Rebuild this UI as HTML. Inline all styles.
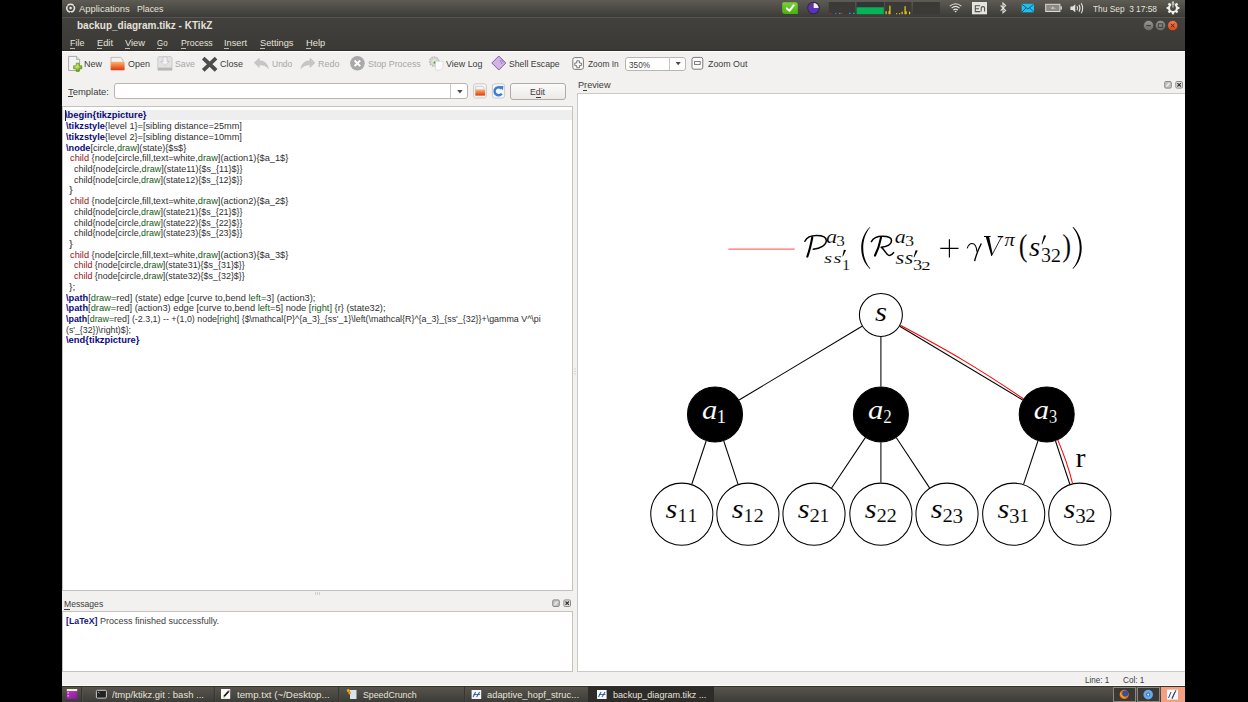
<!DOCTYPE html>
<html><head><meta charset="utf-8"><style>
html,body{margin:0;padding:0}
body{width:1248px;height:702px;background:#000;position:relative;overflow:hidden;font-family:"Liberation Sans",sans-serif}
</style></head><body>
<div style="position:absolute;left:62px;top:0px;width:1123px;height:702px;background:#f2f1f0"></div><div style="position:absolute;left:62px;top:0px;width:1123px;height:17px;background:linear-gradient(#5e5b54,#3c3b37)"></div><div style="position:absolute;left:62px;top:17px;width:1123px;height:17px;background:linear-gradient(#42413d,#3e3d39)"></div><div style="position:absolute;left:62px;top:17px;width:1123px;height:1px;background:#56544e"></div><div style="position:absolute;left:62px;top:34px;width:1123px;height:17px;background:linear-gradient(#3e3d39,#3a3935)"></div><div style="position:absolute;left:62px;top:49.5px;width:1123px;height:1.5px;background:#2e2d2a"></div><div style="position:absolute;left:62px;top:51px;width:1123px;height:1px;background:#ffffff"></div><div id="t0" style="position:absolute;left:79.3px;top:3.99px;font-family:'Liberation Sans',sans-serif;font-size:9.4px;line-height:10.50px;height:10.50px;font-weight:normal;color:#e6e2da;white-space:pre;transform-origin:0 0;transform:scaleX(1.0047);">Applications</div><div id="t1" style="position:absolute;left:137px;top:3.99px;font-family:'Liberation Sans',sans-serif;font-size:9.4px;line-height:10.50px;height:10.50px;font-weight:normal;color:#e6e2da;white-space:pre;transform-origin:0 0;transform:scaleX(0.9346);">Places</div><div id="t2" style="position:absolute;left:76.7px;top:20.20px;font-family:'Liberation Sans',sans-serif;font-size:10.5px;line-height:11.73px;height:11.73px;font-weight:bold;color:#e6e2da;white-space:pre;transform-origin:0 0;transform:scaleX(0.9516);">backup_diagram.tikz - KTikZ</div><div id="t3" style="position:absolute;left:70px;top:38.49px;font-family:'Liberation Sans',sans-serif;font-size:9.4px;line-height:10.50px;height:10.50px;font-weight:normal;color:#e6e2da;white-space:pre;transform-origin:0 0;transform:scaleX(0.9531);">File</div><div style="position:absolute;left:70px;top:48px;width:5px;height:1px;background:#dfdbd2;opacity:.8"></div><div id="t4" style="position:absolute;left:96.5px;top:38.49px;font-family:'Liberation Sans',sans-serif;font-size:9.4px;line-height:10.50px;height:10.50px;font-weight:normal;color:#e6e2da;white-space:pre;transform-origin:0 0;transform:scaleX(0.9903);">Edit</div><div style="position:absolute;left:96.5px;top:48px;width:5.0px;height:1px;background:#dfdbd2;opacity:.8"></div><div id="t5" style="position:absolute;left:124.5px;top:38.49px;font-family:'Liberation Sans',sans-serif;font-size:9.4px;line-height:10.50px;height:10.50px;font-weight:normal;color:#e6e2da;white-space:pre;transform-origin:0 0;transform:scaleX(0.9922);">View</div><div style="position:absolute;left:124.5px;top:48px;width:5.0px;height:1px;background:#dfdbd2;opacity:.8"></div><div id="t6" style="position:absolute;left:157.4px;top:38.49px;font-family:'Liberation Sans',sans-serif;font-size:9.4px;line-height:10.50px;height:10.50px;font-weight:normal;color:#e6e2da;white-space:pre;transform-origin:0 0;transform:scaleX(0.8469);">Go</div><div style="position:absolute;left:157.4px;top:48px;width:5.0px;height:1px;background:#dfdbd2;opacity:.8"></div><div id="t7" style="position:absolute;left:180.6px;top:38.49px;font-family:'Liberation Sans',sans-serif;font-size:9.4px;line-height:10.50px;height:10.50px;font-weight:normal;color:#e6e2da;white-space:pre;transform-origin:0 0;transform:scaleX(0.9358);">Process</div><div style="position:absolute;left:180.6px;top:48px;width:5.0px;height:1px;background:#dfdbd2;opacity:.8"></div><div id="t8" style="position:absolute;left:224px;top:38.49px;font-family:'Liberation Sans',sans-serif;font-size:9.4px;line-height:10.50px;height:10.50px;font-weight:normal;color:#e6e2da;white-space:pre;transform-origin:0 0;transform:scaleX(0.9807);">Insert</div><div style="position:absolute;left:224px;top:48px;width:5px;height:1px;background:#dfdbd2;opacity:.8"></div><div id="t9" style="position:absolute;left:260px;top:38.49px;font-family:'Liberation Sans',sans-serif;font-size:9.4px;line-height:10.50px;height:10.50px;font-weight:normal;color:#e6e2da;white-space:pre;transform-origin:0 0;transform:scaleX(0.9889);">Settings</div><div style="position:absolute;left:260px;top:48px;width:5px;height:1px;background:#dfdbd2;opacity:.8"></div><div id="t10" style="position:absolute;left:305.8px;top:38.49px;font-family:'Liberation Sans',sans-serif;font-size:9.4px;line-height:10.50px;height:10.50px;font-weight:normal;color:#e6e2da;white-space:pre;transform-origin:0 0;transform:scaleX(0.9958);">Help</div><div style="position:absolute;left:305.8px;top:48px;width:5.0px;height:1px;background:#dfdbd2;opacity:.8"></div><div id="t11" style="position:absolute;left:1093px;top:3.99px;font-family:'Liberation Sans',sans-serif;font-size:9.4px;line-height:10.50px;height:10.50px;font-weight:normal;color:#e6e2da;white-space:pre;transform-origin:0 0;transform:scaleX(0.8897);">Thu Sep  3 17:58</div><div id="t12" style="position:absolute;left:84px;top:59.49px;font-family:'Liberation Sans',sans-serif;font-size:9.4px;line-height:10.50px;height:10.50px;font-weight:normal;color:#3c3c3c;white-space:pre;transform-origin:0 0;transform:scaleX(0.9592);">New</div><div id="t13" style="position:absolute;left:128px;top:59.49px;font-family:'Liberation Sans',sans-serif;font-size:9.4px;line-height:10.50px;height:10.50px;font-weight:normal;color:#3c3c3c;white-space:pre;transform-origin:0 0;transform:scaleX(0.9591);">Open</div><div id="t14" style="position:absolute;left:175px;top:59.49px;font-family:'Liberation Sans',sans-serif;font-size:9.4px;line-height:10.50px;height:10.50px;font-weight:normal;color:#a8a6a3;white-space:pre;transform-origin:0 0;transform:scaleX(0.9357);">Save</div><div id="t15" style="position:absolute;left:220px;top:59.49px;font-family:'Liberation Sans',sans-serif;font-size:9.4px;line-height:10.50px;height:10.50px;font-weight:normal;color:#3c3c3c;white-space:pre;transform-origin:0 0;transform:scaleX(0.9596);">Close</div><div id="t16" style="position:absolute;left:271.7px;top:59.49px;font-family:'Liberation Sans',sans-serif;font-size:9.4px;line-height:10.50px;height:10.50px;font-weight:normal;color:#a8a6a3;white-space:pre;transform-origin:0 0;transform:scaleX(0.9054);">Undo</div><div id="t17" style="position:absolute;left:317.8px;top:59.49px;font-family:'Liberation Sans',sans-serif;font-size:9.4px;line-height:10.50px;height:10.50px;font-weight:normal;color:#a8a6a3;white-space:pre;transform-origin:0 0;transform:scaleX(0.9544);">Redo</div><div id="t18" style="position:absolute;left:367.8px;top:59.49px;font-family:'Liberation Sans',sans-serif;font-size:9.4px;line-height:10.50px;height:10.50px;font-weight:normal;color:#a8a6a3;white-space:pre;transform-origin:0 0;transform:scaleX(0.9468);">Stop Process</div><div id="t19" style="position:absolute;left:446.3px;top:59.49px;font-family:'Liberation Sans',sans-serif;font-size:9.4px;line-height:10.50px;height:10.50px;font-weight:normal;color:#3c3c3c;white-space:pre;transform-origin:0 0;transform:scaleX(0.9504);">View Log</div><div id="t20" style="position:absolute;left:508.8px;top:59.49px;font-family:'Liberation Sans',sans-serif;font-size:9.4px;line-height:10.50px;height:10.50px;font-weight:normal;color:#3c3c3c;white-space:pre;transform-origin:0 0;transform:scaleX(0.9263);">Shell Escape</div><div id="t21" style="position:absolute;left:588.3px;top:59.49px;font-family:'Liberation Sans',sans-serif;font-size:9.4px;line-height:10.50px;height:10.50px;font-weight:normal;color:#3c3c3c;white-space:pre;transform-origin:0 0;transform:scaleX(0.8927);">Zoom In</div><div id="t22" style="position:absolute;left:707.8px;top:59.49px;font-family:'Liberation Sans',sans-serif;font-size:9.4px;line-height:10.50px;height:10.50px;font-weight:normal;color:#3c3c3c;white-space:pre;transform-origin:0 0;transform:scaleX(0.9451);">Zoom Out</div><div id="t23" style="position:absolute;left:68px;top:86.89px;font-family:'Liberation Sans',sans-serif;font-size:9.4px;line-height:10.50px;height:10.50px;font-weight:normal;color:#3c3c3c;white-space:pre;transform-origin:0 0;transform:scaleX(1.0060);">Template:</div><div style="position:absolute;left:68px;top:96px;width:5px;height:1px;background:#3c3c3c"></div><div style="position:absolute;left:113.5px;top:83.3px;width:354.0px;height:15.299999999999997px;background:#fff;border:1px solid #b9b6b2;border-radius:3px;box-sizing:border-box"></div><div style="position:absolute;left:450px;top:84px;width:1px;height:14px;background:#c9c6c2"></div><div style="position:absolute;left:510.4px;top:83.3px;width:55.39999999999998px;height:16.299999999999997px;background:linear-gradient(#fbfbfa,#ebeae8);border:1px solid #b0ada9;border-radius:3px;box-sizing:border-box"></div><div id="t24" style="position:absolute;left:530px;top:87.09px;font-family:'Liberation Sans',sans-serif;font-size:9.4px;line-height:10.50px;height:10.50px;font-weight:normal;color:#3c3c3c;white-space:pre;transform-origin:0 0;transform:scaleX(0.9284);">Edit</div><div style="position:absolute;left:536px;top:97px;width:5px;height:1px;background:#3c3c3c"></div><div style="position:absolute;left:625px;top:56.5px;width:61px;height:14.099999999999994px;background:#fff;border:1px solid #b9b6b2;border-radius:3px;box-sizing:border-box"></div><div style="position:absolute;left:669px;top:57px;width:1px;height:13px;background:#c9c6c2"></div><div id="t25" style="position:absolute;left:629px;top:59.89px;font-family:'Liberation Sans',sans-serif;font-size:9.4px;line-height:10.50px;height:10.50px;font-weight:normal;color:#3c3c3c;white-space:pre;transform-origin:0 0;transform:scaleX(0.8756);">350%</div><div style="position:absolute;left:62px;top:106px;width:511px;height:485px;background:#fff;border:1px solid #c6c3bf;box-sizing:border-box"></div><div style="position:absolute;left:63px;top:110px;width:509px;height:10px;background:#eeeeee"></div><div style="position:absolute;left:65px;top:110px;width:1px;height:11px;background:#1a1a1a"></div><div style="position:absolute;left:577px;top:93px;width:608px;height:579px;background:#fff;border:1px solid #cdcac6;border-right:none;box-sizing:border-box"></div><div id="t26" style="position:absolute;left:577.7px;top:80.09px;font-family:'Liberation Sans',sans-serif;font-size:9.4px;line-height:10.50px;height:10.50px;font-weight:normal;color:#3c3c3c;white-space:pre;transform-origin:0 0;transform:scaleX(0.9747);">Preview</div><div style="position:absolute;left:583px;top:90px;width:4px;height:1px;background:#3c3c3c"></div><div id="t27" style="position:absolute;left:63.8px;top:599.09px;font-family:'Liberation Sans',sans-serif;font-size:9.4px;line-height:10.50px;height:10.50px;font-weight:normal;color:#3c3c3c;white-space:pre;transform-origin:0 0;transform:scaleX(0.9173);">Messages</div><div style="position:absolute;left:64px;top:609px;width:6px;height:1px;background:#3c3c3c"></div><div style="position:absolute;left:62px;top:611px;width:511px;height:61px;background:#fff;border:1px solid #c6c3bf;box-sizing:border-box"></div><div id="t28" style="position:absolute;left:65.5px;top:616.49px;font-family:'Liberation Sans',sans-serif;font-size:9.4px;line-height:10.50px;height:10.50px;font-weight:bold;color:#14147a;white-space:pre;transform-origin:0 0;transform:scaleX(0.9351);">[LaTeX]</div><div id="t29" style="position:absolute;left:99.8px;top:616.49px;font-family:'Liberation Sans',sans-serif;font-size:9.4px;line-height:10.50px;height:10.50px;font-weight:normal;color:#3c3c3c;white-space:pre;transform-origin:0 0;transform:scaleX(0.9609);">Process finished successfully.</div><div id="t30" style="position:absolute;left:1084.8px;top:675.09px;font-family:'Liberation Sans',sans-serif;font-size:9.4px;line-height:10.50px;height:10.50px;font-weight:normal;color:#3c3c3c;white-space:pre;transform-origin:0 0;transform:scaleX(0.8595);">Line: 1</div><div id="t31" style="position:absolute;left:1122.5px;top:675.09px;font-family:'Liberation Sans',sans-serif;font-size:9.4px;line-height:10.50px;height:10.50px;font-weight:normal;color:#3c3c3c;white-space:pre;transform-origin:0 0;transform:scaleX(0.8735);">Col: 1</div><div style="position:absolute;left:62px;top:686px;width:1123px;height:16px;background:linear-gradient(#5a564e,#3d3c38)"></div><div style="position:absolute;left:62px;top:686px;width:1123px;height:1px;background:#35332d"></div><div style="position:absolute;left:62px;top:684.5px;width:1123px;height:1.5px;background:#ffffff"></div><div style="position:absolute;left:588px;top:686px;width:126px;height:16px;background:#2d2c29"></div><div id="t32" style="position:absolute;left:112px;top:690.49px;font-family:'Liberation Sans',sans-serif;font-size:9.4px;line-height:10.50px;height:10.50px;font-weight:normal;color:#e6e2da;white-space:pre;transform-origin:0 0;transform:scaleX(1.0148);">/tmp/ktikz.git : bash ...</div><div id="t33" style="position:absolute;left:237px;top:690.49px;font-family:'Liberation Sans',sans-serif;font-size:9.4px;line-height:10.50px;height:10.50px;font-weight:normal;color:#e6e2da;white-space:pre;transform-origin:0 0;transform:scaleX(1.0363);">temp.txt (~/Desktop...</div><div id="t34" style="position:absolute;left:362.6px;top:690.49px;font-family:'Liberation Sans',sans-serif;font-size:9.4px;line-height:10.50px;height:10.50px;font-weight:normal;color:#e6e2da;white-space:pre;transform-origin:0 0;transform:scaleX(0.9365);">SpeedCrunch</div><div id="t35" style="position:absolute;left:487.2px;top:690.49px;font-family:'Liberation Sans',sans-serif;font-size:9.4px;line-height:10.50px;height:10.50px;font-weight:normal;color:#e6e2da;white-space:pre;transform-origin:0 0;transform:scaleX(0.9973);">adaptive_hopf_struc...</div><div id="t36" style="position:absolute;left:612.7px;top:690.49px;font-family:'Liberation Sans',sans-serif;font-size:9.4px;line-height:10.50px;height:10.50px;font-weight:normal;color:#e6e2da;white-space:pre;transform-origin:0 0;transform:scaleX(0.9678);">backup_diagram.tikz ...</div><div id="t37" style="position:absolute;left:65.4px;top:110.49px;font-family:'Liberation Sans',sans-serif;font-size:9.4px;line-height:10.50px;height:10.50px;font-weight:normal;color:#3c3c3c;white-space:pre;transform-origin:0 0;transform:scaleX(0.9964);"><span style="color:#0a0a78;font-weight:bold">\begin{tikzpicture}</span></div><div id="t38" style="position:absolute;left:65.8px;top:121.20px;font-family:'Liberation Sans',sans-serif;font-size:9.4px;line-height:10.50px;height:10.50px;font-weight:normal;color:#3c3c3c;white-space:pre;transform-origin:0 0;transform:scaleX(0.9811);"><span style="color:#0a0a78;font-weight:bold">\tikzstyle</span><span style="color:#303030;font-weight:normal">{level 1}=[sibling distance=25mm]</span></div><div id="t39" style="position:absolute;left:65.8px;top:131.91px;font-family:'Liberation Sans',sans-serif;font-size:9.4px;line-height:10.50px;height:10.50px;font-weight:normal;color:#3c3c3c;white-space:pre;transform-origin:0 0;transform:scaleX(0.9811);"><span style="color:#0a0a78;font-weight:bold">\tikzstyle</span><span style="color:#303030;font-weight:normal">{level 2}=[sibling distance=10mm]</span></div><div id="t40" style="position:absolute;left:65.8px;top:142.62px;font-family:'Liberation Sans',sans-serif;font-size:9.4px;line-height:10.50px;height:10.50px;font-weight:normal;color:#3c3c3c;white-space:pre;transform-origin:0 0;transform:scaleX(0.9774);"><span style="color:#0a0a78;font-weight:bold">\node</span><span style="color:#303030;font-weight:normal">[circle,</span><span style="color:#145a14;font-weight:normal">draw</span><span style="color:#303030;font-weight:normal">](state){$s$}</span></div><div id="t41" style="position:absolute;left:69.6px;top:153.33px;font-family:'Liberation Sans',sans-serif;font-size:9.4px;line-height:10.50px;height:10.50px;font-weight:normal;color:#3c3c3c;white-space:pre;transform-origin:0 0;transform:scaleX(0.9867);"><span style="color:#9a1020;font-weight:normal">child</span><span style="color:#303030;font-weight:normal"> {node[circle,fill,text=white,</span><span style="color:#145a14;font-weight:normal">draw</span><span style="color:#303030;font-weight:normal">](action1){$a_1$}</span></div><div id="t42" style="position:absolute;left:73.8px;top:164.04px;font-family:'Liberation Sans',sans-serif;font-size:9.4px;line-height:10.50px;height:10.50px;font-weight:normal;color:#3c3c3c;white-space:pre;transform-origin:0 0;transform:scaleX(0.9611);"><span style="color:#303030;font-weight:normal">child{node[circle,</span><span style="color:#145a14;font-weight:normal">draw</span><span style="color:#303030;font-weight:normal">](state11){$s_{11}$}}</span></div><div id="t43" style="position:absolute;left:73.8px;top:174.75px;font-family:'Liberation Sans',sans-serif;font-size:9.4px;line-height:10.50px;height:10.50px;font-weight:normal;color:#3c3c3c;white-space:pre;transform-origin:0 0;transform:scaleX(0.9536);"><span style="color:#303030;font-weight:normal">child{node[circle,</span><span style="color:#145a14;font-weight:normal">draw</span><span style="color:#303030;font-weight:normal">](state12){$s_{12}$}}</span></div><div id="t44" style="position:absolute;left:69.2px;top:185.46px;font-family:'Liberation Sans',sans-serif;font-size:9.4px;line-height:10.50px;height:10.50px;font-weight:normal;color:#3c3c3c;white-space:pre;transform-origin:0 0;transform:scaleX(1.2100);"><span style="color:#303030;font-weight:normal">}</span></div><div id="t45" style="position:absolute;left:69.6px;top:196.17px;font-family:'Liberation Sans',sans-serif;font-size:9.4px;line-height:10.50px;height:10.50px;font-weight:normal;color:#3c3c3c;white-space:pre;transform-origin:0 0;transform:scaleX(0.9867);"><span style="color:#9a1020;font-weight:normal">child</span><span style="color:#303030;font-weight:normal"> {node[circle,fill,text=white,</span><span style="color:#145a14;font-weight:normal">draw</span><span style="color:#303030;font-weight:normal">](action2){$a_2$}</span></div><div id="t46" style="position:absolute;left:73.8px;top:206.88px;font-family:'Liberation Sans',sans-serif;font-size:9.4px;line-height:10.50px;height:10.50px;font-weight:normal;color:#3c3c3c;white-space:pre;transform-origin:0 0;transform:scaleX(0.9536);"><span style="color:#303030;font-weight:normal">child{node[circle,</span><span style="color:#145a14;font-weight:normal">draw</span><span style="color:#303030;font-weight:normal">](state21){$s_{21}$}}</span></div><div id="t47" style="position:absolute;left:73.8px;top:217.59px;font-family:'Liberation Sans',sans-serif;font-size:9.4px;line-height:10.50px;height:10.50px;font-weight:normal;color:#3c3c3c;white-space:pre;transform-origin:0 0;transform:scaleX(0.9536);"><span style="color:#303030;font-weight:normal">child{node[circle,</span><span style="color:#145a14;font-weight:normal">draw</span><span style="color:#303030;font-weight:normal">](state22){$s_{22}$}}</span></div><div id="t48" style="position:absolute;left:73.8px;top:228.30px;font-family:'Liberation Sans',sans-serif;font-size:9.4px;line-height:10.50px;height:10.50px;font-weight:normal;color:#3c3c3c;white-space:pre;transform-origin:0 0;transform:scaleX(0.9536);"><span style="color:#303030;font-weight:normal">child{node[circle,</span><span style="color:#145a14;font-weight:normal">draw</span><span style="color:#303030;font-weight:normal">](state23){$s_{23}$}}</span></div><div id="t49" style="position:absolute;left:69.2px;top:239.01px;font-family:'Liberation Sans',sans-serif;font-size:9.4px;line-height:10.50px;height:10.50px;font-weight:normal;color:#3c3c3c;white-space:pre;transform-origin:0 0;transform:scaleX(1.2100);"><span style="color:#303030;font-weight:normal">}</span></div><div id="t50" style="position:absolute;left:69.6px;top:249.72px;font-family:'Liberation Sans',sans-serif;font-size:9.4px;line-height:10.50px;height:10.50px;font-weight:normal;color:#3c3c3c;white-space:pre;transform-origin:0 0;transform:scaleX(0.9867);"><span style="color:#9a1020;font-weight:normal">child</span><span style="color:#303030;font-weight:normal"> {node[circle,fill,text=white,</span><span style="color:#145a14;font-weight:normal">draw</span><span style="color:#303030;font-weight:normal">](action3){$a_3$}</span></div><div id="t51" style="position:absolute;left:73.8px;top:260.43px;font-family:'Liberation Sans',sans-serif;font-size:9.4px;line-height:10.50px;height:10.50px;font-weight:normal;color:#3c3c3c;white-space:pre;transform-origin:0 0;transform:scaleX(0.9525);"><span style="color:#9a1020;font-weight:normal">child</span><span style="color:#303030;font-weight:normal"> {node[circle,</span><span style="color:#145a14;font-weight:normal">draw</span><span style="color:#303030;font-weight:normal">](state31){$s_{31}$}}</span></div><div id="t52" style="position:absolute;left:73.8px;top:271.14px;font-family:'Liberation Sans',sans-serif;font-size:9.4px;line-height:10.50px;height:10.50px;font-weight:normal;color:#3c3c3c;white-space:pre;transform-origin:0 0;transform:scaleX(0.9525);"><span style="color:#9a1020;font-weight:normal">child</span><span style="color:#303030;font-weight:normal"> {node[circle,</span><span style="color:#145a14;font-weight:normal">draw</span><span style="color:#303030;font-weight:normal">](state32){$s_{32}$}}</span></div><div id="t53" style="position:absolute;left:69.2px;top:281.85px;font-family:'Liberation Sans',sans-serif;font-size:9.4px;line-height:10.50px;height:10.50px;font-weight:normal;color:#3c3c3c;white-space:pre;transform-origin:0 0;transform:scaleX(1.0957);"><span style="color:#303030;font-weight:normal">};</span></div><div id="t54" style="position:absolute;left:65.8px;top:292.56px;font-family:'Liberation Sans',sans-serif;font-size:9.4px;line-height:10.50px;height:10.50px;font-weight:normal;color:#3c3c3c;white-space:pre;transform-origin:0 0;transform:scaleX(0.9907);"><span style="color:#0a0a78;font-weight:bold">\path</span><span style="color:#303030;font-weight:normal">[</span><span style="color:#145a14;font-weight:normal">draw=</span><span style="color:#303030;font-weight:normal">red] (state) edge [curve to,bend </span><span style="color:#145a14;font-weight:normal">left=</span><span style="color:#303030;font-weight:normal">3] (action3);</span></div><div id="t55" style="position:absolute;left:65.8px;top:303.27px;font-family:'Liberation Sans',sans-serif;font-size:9.4px;line-height:10.50px;height:10.50px;font-weight:normal;color:#3c3c3c;white-space:pre;transform-origin:0 0;transform:scaleX(0.9871);"><span style="color:#0a0a78;font-weight:bold">\path</span><span style="color:#303030;font-weight:normal">[</span><span style="color:#145a14;font-weight:normal">draw=</span><span style="color:#303030;font-weight:normal">red] (action3) edge [curve to,bend </span><span style="color:#145a14;font-weight:normal">left=</span><span style="color:#303030;font-weight:normal">5] node [</span><span style="color:#145a14;font-weight:normal">right</span><span style="color:#303030;font-weight:normal">] {r} (state32);</span></div><div id="t56" style="position:absolute;left:65.8px;top:313.98px;font-family:'Liberation Sans',sans-serif;font-size:9.4px;line-height:10.50px;height:10.50px;font-weight:normal;color:#3c3c3c;white-space:pre;transform-origin:0 0;transform:scaleX(0.9471);"><span style="color:#0a0a78;font-weight:bold">\path</span><span style="color:#303030;font-weight:normal">[</span><span style="color:#145a14;font-weight:normal">draw=</span><span style="color:#303030;font-weight:normal">red] (-2.3,1) -- +(1,0) node[</span><span style="color:#145a14;font-weight:normal">right</span><span style="color:#303030;font-weight:normal">] {$\mathcal{P}^{a_3}_{ss&#x27;_1}\left(\mathcal{R}^{a_3}_{ss&#x27;_{32}}+\gamma V^\pi</span></div><div id="t57" style="position:absolute;left:65.8px;top:324.69px;font-family:'Liberation Sans',sans-serif;font-size:9.4px;line-height:10.50px;height:10.50px;font-weight:normal;color:#3c3c3c;white-space:pre;transform-origin:0 0;transform:scaleX(0.9346);"><span style="color:#303030;font-weight:normal">(s&#x27;_{32})\right)$};</span></div><div id="t58" style="position:absolute;left:65.8px;top:335.40px;font-family:'Liberation Sans',sans-serif;font-size:9.4px;line-height:10.50px;height:10.50px;font-weight:normal;color:#3c3c3c;white-space:pre;transform-origin:0 0;transform:scaleX(0.9993);"><span style="color:#0a0a78;font-weight:bold">\end{tikzpicture}</span></div><svg width="1248" height="702" style="position:absolute;left:0;top:0;color:#000"><line x1="862.03" y1="326.31" x2="739.02" y2="400.01" stroke="#000" stroke-width="1.05"/><line x1="706.16" y1="440.97" x2="691.77" y2="484.22" stroke="#000" stroke-width="1.05"/><line x1="723.77" y1="440.99" x2="738.01" y2="484.19" stroke="#000" stroke-width="1.05"/><line x1="880.90" y1="337.00" x2="880.90" y2="386.40" stroke="#000" stroke-width="1.05"/><line x1="865.31" y1="437.66" x2="831.60" y2="487.95" stroke="#000" stroke-width="1.05"/><line x1="880.90" y1="442.40" x2="880.90" y2="482.60" stroke="#000" stroke-width="1.05"/><line x1="896.36" y1="437.74" x2="929.55" y2="487.85" stroke="#000" stroke-width="1.05"/><line x1="899.77" y1="326.31" x2="1022.69" y2="400.00" stroke="#000" stroke-width="1.05"/><line x1="1037.91" y1="440.98" x2="1023.62" y2="484.20" stroke="#000" stroke-width="1.05"/><line x1="1055.51" y1="440.98" x2="1069.85" y2="484.21" stroke="#000" stroke-width="1.05"/><circle cx="880.9" cy="315" r="21.48" fill="#fff" stroke="#000" stroke-width="1.05"/><circle cx="715" cy="414.4" r="27.48" fill="#000" stroke="#000" stroke-width="1.05"/><circle cx="880.9" cy="414.4" r="27.48" fill="#000" stroke="#000" stroke-width="1.05"/><circle cx="1046.7" cy="414.4" r="27.48" fill="#000" stroke="#000" stroke-width="1.05"/><circle cx="681.8" cy="514.2" r="31.08" fill="#fff" stroke="#000" stroke-width="1.05"/><circle cx="747.9" cy="514.2" r="31.08" fill="#fff" stroke="#000" stroke-width="1.05"/><circle cx="814" cy="514.2" r="31.08" fill="#fff" stroke="#000" stroke-width="1.05"/><circle cx="880.9" cy="514.2" r="31.08" fill="#fff" stroke="#000" stroke-width="1.05"/><circle cx="947" cy="514.2" r="31.08" fill="#fff" stroke="#000" stroke-width="1.05"/><circle cx="1013.7" cy="514.2" r="31.08" fill="#fff" stroke="#000" stroke-width="1.05"/><circle cx="1079.8" cy="514.2" r="31.08" fill="#fff" stroke="#000" stroke-width="1.05"/><path d="M900.34,325.31 C949.92,351.61 976.90,367.42 1023.47,398.77" fill="none" stroke="#f00" stroke-width="1.05"/><path d="M1057.80,440.11 C1064.90,456.56 1068.37,466.02 1072.50,483.45" fill="none" stroke="#f00" stroke-width="1.05"/><line x1="728.4" y1="249.1" x2="794.7" y2="249.1" stroke="#f00" stroke-width="0.95" opacity="0.75"/><text transform="translate(875.02,320.93) scale(0.30864,0.27653)" font-family="'Liberation Serif',serif" font-style="italic" font-size="100" fill="currentColor" stroke="#fff" stroke-width="0.41">s</text><g fill="#fff" style="color:#fff"><text transform="translate(701.98,418.91) scale(0.30743,0.28069)" font-family="'Liberation Serif',serif" font-style="italic" font-size="100" fill="currentColor" stroke="#000" stroke-width="0.41">a</text><text transform="translate(716.40,423.00) scale(0.19315,0.19389)" font-family="'Liberation Serif',serif" font-style="normal" font-size="100" fill="currentColor" stroke="#000" stroke-width="0.62">1</text></g><g fill="#fff" style="color:#fff"><text transform="translate(867.88,418.91) scale(0.30743,0.28069)" font-family="'Liberation Serif',serif" font-style="italic" font-size="100" fill="currentColor" stroke="#000" stroke-width="0.41">a</text><text transform="translate(883.25,423.00) scale(0.16963,0.19332)" font-family="'Liberation Serif',serif" font-style="normal" font-size="100" fill="currentColor" stroke="#000" stroke-width="0.66">2</text></g><g fill="#fff" style="color:#fff"><text transform="translate(1033.68,418.91) scale(0.30743,0.28069)" font-family="'Liberation Serif',serif" font-style="italic" font-size="100" fill="currentColor" stroke="#000" stroke-width="0.41">a</text><text transform="translate(1049.01,422.81) scale(0.16461,0.19051)" font-family="'Liberation Serif',serif" font-style="normal" font-size="100" fill="currentColor" stroke="#000" stroke-width="0.68">3</text></g><text transform="translate(665.53,517.63) scale(0.30576,0.27237)" font-family="'Liberation Serif',serif" font-style="italic" font-size="100" fill="currentColor" stroke="#fff" stroke-width="0.42">s</text><text transform="translate(677.38,522.10) scale(0.19599,0.18329)" font-family="'Liberation Serif',serif" font-style="normal" font-size="100" fill="currentColor" stroke="#fff" stroke-width="0.63">1</text><text transform="translate(687.38,522.10) scale(0.19599,0.18329)" font-family="'Liberation Serif',serif" font-style="normal" font-size="100" fill="currentColor" stroke="#fff" stroke-width="0.63">1</text><text transform="translate(731.63,517.63) scale(0.30576,0.27237)" font-family="'Liberation Serif',serif" font-style="italic" font-size="100" fill="currentColor" stroke="#fff" stroke-width="0.42">s</text><text transform="translate(743.48,522.10) scale(0.19599,0.18329)" font-family="'Liberation Serif',serif" font-style="normal" font-size="100" fill="currentColor" stroke="#fff" stroke-width="0.63">1</text><text transform="translate(753.39,521.90) scale(0.20705,0.19030)" font-family="'Liberation Serif',serif" font-style="normal" font-size="100" fill="currentColor" stroke="#fff" stroke-width="0.60">2</text><text transform="translate(797.73,517.63) scale(0.30576,0.27237)" font-family="'Liberation Serif',serif" font-style="italic" font-size="100" fill="currentColor" stroke="#fff" stroke-width="0.42">s</text><text transform="translate(809.49,521.90) scale(0.20705,0.19030)" font-family="'Liberation Serif',serif" font-style="normal" font-size="100" fill="currentColor" stroke="#fff" stroke-width="0.60">2</text><text transform="translate(819.58,522.10) scale(0.19599,0.18329)" font-family="'Liberation Serif',serif" font-style="normal" font-size="100" fill="currentColor" stroke="#fff" stroke-width="0.63">1</text><text transform="translate(864.63,517.63) scale(0.30576,0.27237)" font-family="'Liberation Serif',serif" font-style="italic" font-size="100" fill="currentColor" stroke="#fff" stroke-width="0.42">s</text><text transform="translate(876.39,521.90) scale(0.20705,0.19030)" font-family="'Liberation Serif',serif" font-style="normal" font-size="100" fill="currentColor" stroke="#fff" stroke-width="0.60">2</text><text transform="translate(886.39,521.90) scale(0.20705,0.19030)" font-family="'Liberation Serif',serif" font-style="normal" font-size="100" fill="currentColor" stroke="#fff" stroke-width="0.60">2</text><text transform="translate(930.73,517.63) scale(0.30576,0.27237)" font-family="'Liberation Serif',serif" font-style="italic" font-size="100" fill="currentColor" stroke="#fff" stroke-width="0.42">s</text><text transform="translate(942.49,521.90) scale(0.20705,0.19030)" font-family="'Liberation Serif',serif" font-style="normal" font-size="100" fill="currentColor" stroke="#fff" stroke-width="0.60">2</text><text transform="translate(952.39,522.60) scale(0.21061,0.20093)" font-family="'Liberation Serif',serif" font-style="normal" font-size="100" fill="currentColor" stroke="#fff" stroke-width="0.58">3</text><text transform="translate(997.43,517.63) scale(0.30576,0.27237)" font-family="'Liberation Serif',serif" font-style="italic" font-size="100" fill="currentColor" stroke="#fff" stroke-width="0.42">s</text><text transform="translate(1009.09,522.60) scale(0.21061,0.20093)" font-family="'Liberation Serif',serif" font-style="normal" font-size="100" fill="currentColor" stroke="#fff" stroke-width="0.58">3</text><text transform="translate(1019.28,522.10) scale(0.19599,0.18329)" font-family="'Liberation Serif',serif" font-style="normal" font-size="100" fill="currentColor" stroke="#fff" stroke-width="0.63">1</text><text transform="translate(1063.53,517.63) scale(0.30576,0.27237)" font-family="'Liberation Serif',serif" font-style="italic" font-size="100" fill="currentColor" stroke="#fff" stroke-width="0.42">s</text><text transform="translate(1075.19,522.60) scale(0.21061,0.20093)" font-family="'Liberation Serif',serif" font-style="normal" font-size="100" fill="currentColor" stroke="#fff" stroke-width="0.58">3</text><text transform="translate(1085.29,521.90) scale(0.20705,0.19030)" font-family="'Liberation Serif',serif" font-style="normal" font-size="100" fill="currentColor" stroke="#fff" stroke-width="0.60">2</text><text transform="translate(1075.59,467.40) scale(0.30243,0.27165)" font-family="'Liberation Serif',serif" font-style="normal" font-size="100" fill="currentColor" stroke="#fff" stroke-width="0.42">r</text><text transform="translate(825.94,242.71) scale(0.22191,0.18089)" font-family="'Liberation Serif',serif" font-style="italic" font-size="100" fill="currentColor" stroke="#fff" stroke-width="0.60">a</text><text transform="translate(836.28,245.76) scale(0.17188,0.14288)" font-family="'Liberation Serif',serif" font-style="normal" font-size="100" fill="currentColor" stroke="#fff" stroke-width="0.76">3</text><text transform="translate(823.95,263.05) scale(0.20768,0.15594)" font-family="'Liberation Serif',serif" font-style="italic" font-size="100" fill="currentColor" stroke="#fff" stroke-width="0.66">s</text><text transform="translate(833.55,263.05) scale(0.20480,0.15594)" font-family="'Liberation Serif',serif" font-style="italic" font-size="100" fill="currentColor" stroke="#fff" stroke-width="0.67">s</text><text transform="translate(841.88,269.80) scale(0.16191,0.13633)" font-family="'Liberation Serif',serif" font-style="normal" font-size="100" fill="currentColor" stroke="#fff" stroke-width="0.80">1</text><text transform="translate(894.75,243.31) scale(0.21959,0.18921)" font-family="'Liberation Serif',serif" font-style="italic" font-size="100" fill="currentColor" stroke="#fff" stroke-width="0.59">a</text><text transform="translate(904.93,245.56) scale(0.18156,0.13991)" font-family="'Liberation Serif',serif" font-style="normal" font-size="100" fill="currentColor" stroke="#fff" stroke-width="0.75">3</text><text transform="translate(895.53,264.02) scale(0.22499,0.18297)" font-family="'Liberation Serif',serif" font-style="italic" font-size="100" fill="currentColor" stroke="#fff" stroke-width="0.59">s</text><text transform="translate(904.64,264.02) scale(0.21634,0.18297)" font-family="'Liberation Serif',serif" font-style="italic" font-size="100" fill="currentColor" stroke="#fff" stroke-width="0.60">s</text><text transform="translate(913.02,270.27) scale(0.18398,0.13544)" font-family="'Liberation Serif',serif" font-style="normal" font-size="100" fill="currentColor" stroke="#fff" stroke-width="0.75">3</text><text transform="translate(921.28,269.80) scale(0.18709,0.12838)" font-family="'Liberation Serif',serif" font-style="normal" font-size="100" fill="currentColor" stroke="#fff" stroke-width="0.76">2</text><text transform="translate(1004.59,245.71) scale(0.20441,0.19627)" font-family="'Liberation Serif',serif" font-style="italic" font-size="100" fill="currentColor" stroke="#fff" stroke-width="0.60">π</text><text transform="translate(1018.64,255.96) scale(0.26476,0.31211)" font-family="'Liberation Serif',serif" font-style="normal" font-size="100" fill="currentColor" stroke="#fff" stroke-width="0.42">(</text><text transform="translate(1028.95,255.54) scale(0.28845,0.27029)" font-family="'Liberation Serif',serif" font-style="italic" font-size="100" fill="currentColor" stroke="#fff" stroke-width="0.43">s</text><text transform="translate(1041.05,262.40) scale(0.19851,0.20242)" font-family="'Liberation Serif',serif" font-style="normal" font-size="100" fill="currentColor" stroke="#fff" stroke-width="0.60">3</text><text transform="translate(1050.70,262.00) scale(0.20455,0.19634)" font-family="'Liberation Serif',serif" font-style="normal" font-size="100" fill="currentColor" stroke="#fff" stroke-width="0.60">2</text><text transform="translate(1062.35,255.96) scale(0.26476,0.31211)" font-family="'Liberation Serif',serif" font-style="normal" font-size="100" fill="currentColor" stroke="#fff" stroke-width="0.42">)</text><path d="M967.1,248.4 C968.4,244.9 970.2,243.4 972,243.4 C975.2,243.4 976.6,247 977,251.8" fill="none" stroke="#000" stroke-width="1.05"/><path d="M981.3,243.5 C979,248 976.2,254.5 974.6,261.2" fill="none" stroke="#000" stroke-width="1.35"/><path d="M984,236.5 H990.6 M997.8,236.6 H1003.3" fill="none" stroke="#000" stroke-width="1.1"/><path d="M985.6,236.3 L989,236.3 L992.6,253.8 L991.4,256.2 Z" fill="#000"/><path d="M1001.6,236.9 L991.4,256" stroke="#000" stroke-width="0.85"/><path d="M940.3,248.4 H958.5 M949.4,239.3 V257.5" stroke="#000" stroke-width="1.15"/><path d="M869.9,226.9 C863.6,233 861.2,240.5 861.2,248 C861.2,255.5 863.6,263 869.9,269 L870.3,268.6 C865.3,262.5 863.2,255.5 863.2,248 C863.2,240.5 865.3,233.5 870.3,227.3 Z" fill="#000"/><path d="M1073,226.8 C1079.3,232.9 1081.7,240.5 1081.7,248 C1081.7,255.5 1079.3,263 1073,269 L1072.6,268.6 C1077.6,262.5 1079.7,255.5 1079.7,248 C1079.7,240.5 1077.6,233.5 1072.6,227.2 Z" fill="#000"/><path d="M843.80,250.00 Q844.90,249.20 846.00,250.20 L842.90,256.60 L842.40,256.30 Z" fill="#000"/><path d="M915.50,250.60 Q916.60,249.80 917.70,250.80 L914.10,257.60 L913.60,257.30 Z" fill="#000"/><path d="M1043.90,235.50 Q1045.00,234.70 1046.10,235.70 L1042.10,244.50 L1041.60,244.20 Z" fill="#000"/><path d="M804.9,241.3 C806.6,237.6 810.8,235.6 816.5,235.6 C823.2,235.6 826.3,237.4 826.3,240.6 C826.3,245.2 820.5,248.6 813.2,249.2" fill="none" stroke="#000" stroke-width="1.5" stroke-linecap="round"/><path d="M812.3,237.2 C811.2,243 809.6,250.5 807.3,256.6" fill="none" stroke="#000" stroke-width="2.1" stroke-linecap="round"/><path d="M871.4,241.6 C873.2,238 877.2,236.3 882.5,236.3 C888.5,236.3 891.5,237.6 891.5,240.6 C891.5,244.6 886.5,246.8 881.2,247.2 C884.2,248.5 886.2,255.2 889.2,255.4 C891.2,255.5 892.6,254 893.6,252.6" fill="none" stroke="#000" stroke-width="1.5" stroke-linecap="round" stroke-linejoin="round"/><path d="M881.0,237.6 C879.8,243.5 877.6,250.5 875.0,255.6" fill="none" stroke="#000" stroke-width="2.1" stroke-linecap="round"/></svg><svg width="1248" height="702" style="position:absolute;left:0;top:0"><defs><linearGradient id="gOpen" x1="0" y1="0" x2="0" y2="1"><stop offset="0" stop-color="#f6b66a"/><stop offset="1" stop-color="#e2360e"/></linearGradient><linearGradient id="gBtn" x1="0" y1="0" x2="0" y2="1"><stop offset="0" stop-color="#9a9893"/><stop offset="1" stop-color="#6b6964"/></linearGradient><linearGradient id="gCls" x1="0" y1="0" x2="0" y2="1"><stop offset="0" stop-color="#f77a4a"/><stop offset="1" stop-color="#e2461a"/></linearGradient><linearGradient id="gGreen" x1="0" y1="0" x2="0" y2="1"><stop offset="0" stop-color="#7ad03a"/><stop offset="1" stop-color="#4ab010"/></linearGradient><radialGradient id="gPlus" cx=".4" cy=".35" r=".7"><stop offset="0" stop-color="#e4f270"/><stop offset="1" stop-color="#4d9a10"/></radialGradient><linearGradient id="gPurple" x1="0" y1="0" x2="1" y2="1"><stop offset="0" stop-color="#c030c8"/><stop offset="1" stop-color="#8a1aa0"/></linearGradient></defs><circle cx="70.6" cy="8.1" r="3.9" fill="none" stroke="#e8e6e0" stroke-width="1.6"/><circle cx="70.6" cy="8.1" r="1.3" fill="#e8e6e0"/><path d="M67.3,6 L66,5.2 M73.9,5.6 L75,5 M70.6,12 L70.6,13.2" stroke="#4a4843" stroke-width="1.2"/><path d="M783.5,2.3 L795.5,2.3 Q797.8,2.3 797.8,5 L797.8,13.9 L785,13.9 Q782.2,13.9 782.2,11 L782.2,4 Q782.2,2.3 783.5,2.3 Z" fill="url(#gGreen)"/><path d="M786.8,8.4 L789.4,10.8 L793.8,5.2" fill="none" stroke="#fff" stroke-width="2" stroke-linecap="round" stroke-linejoin="round"/><circle cx="813.5" cy="8" r="6.3" fill="#2e2d2a"/><circle cx="813.5" cy="8" r="5.3" fill="#5a32c0"/><path d="M813.5,8 L813.5,2.9 A5.1,5.1 0 0 1 818.6,8 Z" fill="#f4eef8"/><path d="M813.5,8 L813.5,2.7 A5.3,5.3 0 0 0 808.5,6.3 Z" fill="#7a2aa0" opacity=".7"/><rect x="828.8" y="2" width="26.3" height="12.2" fill="#3b3a36"/><rect x="856.7" y="2" width="27.1" height="12.2" fill="#3b3a36"/><rect x="884.8" y="2" width="26.7" height="12.2" fill="#3b3a36"/><rect x="913" y="2" width="26.9" height="12.2" fill="#3b3a36"/><rect x="856.7" y="2" width="27.1" height="5.2" fill="#30353a"/><rect x="856.7" y="7.1" width="27.1" height="7.1" fill="#05b457"/><rect x="856.7" y="6.6" width="27.1" height="0.6" fill="#4a2a30"/><rect x="885.5" y="11.2" width="1.2" height="3" fill="#f0d020"/><rect x="888.5" y="11.2" width="1.2" height="3" fill="#f0d020"/><rect x="889.3" y="5.7" width="1.2" height="8.5" fill="#f0d020"/><rect x="896" y="13.2" width="1.2" height="1" fill="#f0d020"/><rect x="899" y="13.2" width="1.2" height="1" fill="#f0d020"/><rect x="901.5" y="11.7" width="1.2" height="2.5" fill="#f0d020"/><rect x="904.5" y="6.2" width="1.2" height="8" fill="#f0d020"/><rect x="905.5" y="11.2" width="1.2" height="3" fill="#f0d020"/><rect x="909" y="11.7" width="1.2" height="2.5" fill="#f0d020"/><rect x="829.5" y="12.8" width="1.5" height="1.2" fill="#d02020"/><rect x="835" y="12.8" width="1.5" height="1.2" fill="#4060e0"/><rect x="839" y="12.8" width="1.5" height="1.2" fill="#20a0f0"/><rect x="841" y="12.8" width="1.5" height="1.2" fill="#d02020"/><rect x="849" y="12.8" width="1.5" height="1.2" fill="#20a0f0"/><rect x="853" y="12.8" width="1.5" height="1.2" fill="#20a0f0"/><path d="M949.8,6.2 Q955.6,1.4 961.4,6.2 M951.6,8.2 Q955.6,4.6 959.6,8.2 M953.3,10.1 Q955.6,8.0 957.9,10.1" fill="none" stroke="#e4e1da" stroke-width="1.1"/><path d="M954.3,11.1 L955.6,12.6 L956.9,11.1 Q955.6,10.2 954.3,11.1Z" fill="#e4e1da"/><rect x="972" y="2" width="15" height="12.3" fill="#e6e4df"/><path d="M980.2,5.8 L975.3,5.8 L975.3,11.6 L980.2,11.6 M975.3,8.7 L979,8.7 M981.2,11.6 L981.2,8 Q981.2,6.6 983,6.6 Q984.6,6.6 984.6,8 L984.6,11.6" fill="none" stroke="#55534e" stroke-width="1.1"/><path d="M1000.6,5.5 L1005.6,10.4 L1003,12.8 L1003,3 L1005.6,5.6 L1000.6,10.6" fill="none" stroke="#e4e1da" stroke-width="1.1"/><rect x="1021.7" y="3.8" width="12.3" height="8.5" fill="#1ec0f2"/><path d="M1022,4.3 L1027.85,9 L1033.7,4.3 M1022,12 L1026,8 M1033.7,12 L1029.7,8" fill="none" stroke="#1a3a50" stroke-width=".8"/><rect x="1045.7" y="4.3" width="14.2" height="7.2" fill="#8c8984" stroke="#dcd9d2" stroke-width="1"/><rect x="1060.4" y="6.3" width="1.5" height="3.3" fill="#dcd9d2"/><path d="M1049,7 L1052.8,8.6 L1052,6.6 L1056.8,9.4 L1053,7.8 L1053.6,9.6 Z" fill="#f4f2ee"/><path d="M1070.4,6.5 L1072.6,6.5 L1075.3,4.3 L1075.3,12.2 L1072.6,10 L1070.4,10 Z" fill="#e4e1da"/><path d="M1077,6.3 Q1078.2,8.25 1077,10.2 M1079,4.8 Q1081,8.25 1079,11.7 M1081.2,3.2 Q1084.2,8.25 1081.2,13.3" fill="none" stroke="#e4e1da" stroke-width="1.1"/><rect x="1171.9" y="1.6" width="2.2" height="3" fill="#f0eee8" transform="rotate(0 1173 8)"/><rect x="1171.9" y="1.6" width="2.2" height="3" fill="#f0eee8" transform="rotate(45 1173 8)"/><rect x="1171.9" y="1.6" width="2.2" height="3" fill="#f0eee8" transform="rotate(90 1173 8)"/><rect x="1171.9" y="1.6" width="2.2" height="3" fill="#f0eee8" transform="rotate(135 1173 8)"/><rect x="1171.9" y="1.6" width="2.2" height="3" fill="#f0eee8" transform="rotate(180 1173 8)"/><rect x="1171.9" y="1.6" width="2.2" height="3" fill="#f0eee8" transform="rotate(225 1173 8)"/><rect x="1171.9" y="1.6" width="2.2" height="3" fill="#f0eee8" transform="rotate(270 1173 8)"/><rect x="1171.9" y="1.6" width="2.2" height="3" fill="#f0eee8" transform="rotate(315 1173 8)"/><circle cx="1173" cy="8" r="4" fill="none" stroke="#f0eee8" stroke-width="2.2"/><rect x="1172.3" y="2" width="1.4" height="5.5" fill="#cfccc5"/><rect x="1171.4" y="2.6" width="0.8" height="4" fill="#3e3d39"/><rect x="1173.8" y="2.6" width="0.8" height="4" fill="#3e3d39"/><circle cx="1148.6" cy="25.6" r="5.1" fill="url(#gBtn)" stroke="#3a3935" stroke-width=".6"/><rect x="1146.2" y="25" width="4.8" height="1.2" fill="#44423e"/><circle cx="1160.5" cy="25.6" r="5.1" fill="url(#gBtn)" stroke="#3a3935" stroke-width=".6"/><rect x="1158.3" y="23.8" width="4.4" height="3.6" fill="none" stroke="#44423e" stroke-width="1"/><circle cx="1172.7" cy="25.6" r="5.1" fill="url(#gCls)" stroke="#2a3a3a" stroke-width=".6"/><path d="M1170.9,23.8 L1174.5,27.4 M1174.5,23.8 L1170.9,27.4" stroke="#3a2a20" stroke-width="1"/><path d="M68.6,56.4 L76.5,56.4 L79.6,59.5 L79.6,70.5 L68.6,70.5 Z" fill="#f4f4f4" stroke="#a9a9a9" stroke-width="1"/><path d="M76.5,56.4 L76.5,59.5 L79.6,59.5" fill="#ddd" stroke="#a9a9a9" stroke-width=".8"/><path d="M76.2,63.2 h3 v2.6 h2.6 v3 h-2.6 v2.6 h-3 v-2.6 h-2.6 v-3 h2.6 Z" fill="url(#gPlus)" stroke="#4a8a10" stroke-width=".6"/><path d="M111,57.4 L120.5,57.4 L123,59.8 L123,63 L111,63 Z" fill="#f2f2f2" stroke="#b0b0b0" stroke-width=".8"/><rect x="110.6" y="61.8" width="14" height="8.4" rx=".8" fill="url(#gOpen)"/><path d="M158.6,56.6 L171,56.6 L172,58 L172,70 L157.8,70 L157.8,58 Z" fill="#e2e2e2" stroke="#c4c4c4" stroke-width=".8"/><rect x="158" y="67.6" width="14" height="2.8" fill="#b8b8b8"/><path d="M163,57 L167,57 L167,61.5 L169.5,61.5 L165,65.5 L160.5,61.5 L163,61.5 Z" fill="#f2f2f2" stroke="#c4c4c4" stroke-width=".8"/><path d="M204.6,59.4 L214.7,69 M214.7,59.4 L204.6,69" stroke="#4c4c4c" stroke-width="3.8" stroke-linecap="square"/><path d="M254.3,62.7 L259.2,58.2 L259.2,60.8 Q266.8,60.6 268.4,68.6 Q265.4,64.6 259.2,64.8 L259.2,67.4 Z" fill="#c6c6c6" stroke="#bcbcbc" stroke-width=".6" stroke-linejoin="round"/><path d="M315,62.7 L310.1,58.2 L310.1,60.8 Q302.5,60.6 300.9,68.6 Q303.9,64.6 310.1,64.8 L310.1,67.4 Z" fill="#c6c6c6" stroke="#bcbcbc" stroke-width=".6" stroke-linejoin="round"/><circle cx="357.4" cy="63.3" r="7.3" fill="#a9a9a9"/><path d="M354.6,60.5 L360.2,66.1 M360.2,60.5 L354.6,66.1" stroke="#fff" stroke-width="1.9"/><circle cx="434.2" cy="61.6" r="4.6" fill="#d6d6d6" stroke="#b8b8b8" stroke-width="1.4" stroke-dasharray="1.6 1"/><circle cx="434.2" cy="61.6" r="2" fill="#e8e8e8"/><circle cx="434.8" cy="62.5" r="1.3" fill="#4ab010"/><path d="M435.5,61.3 L443,61.3 L443,67.5 L440.5,70.2 L435.5,70.2 Z" fill="#fbfbfb" stroke="#d0d0d0" stroke-width=".6"/><path d="M498.8,56 L505.8,63 L498.8,70 L491.8,63 Z" fill="#cdb6e4" stroke="#8a5aa8" stroke-width="1"/><path d="M500,60 L502,64 M501.5,59.5 L503.5,62.5" stroke="#9a6ab8" stroke-width=".8"/><rect x="572.8" y="57.6" width="10.6" height="11.8" rx="2" fill="#fbfbfb" stroke="#7a7a7a" stroke-width="1"/><path d="M576.8,60.8 h2.6 v2.2 h2 v2.6 h-2 v2.2 h-2.6 v-2.2 h-2 v-2.6 h2 Z" fill="#fff" stroke="#6a6a6a" stroke-width=".9"/><rect x="692" y="57.4" width="10.8" height="11.8" rx="2" fill="#fbfbfb" stroke="#7a7a7a" stroke-width="1"/><rect x="694.6" y="61.6" width="5.6" height="2.8" fill="#fff" stroke="#6a6a6a" stroke-width=".9"/><path d="M675.6,62 L680.8,62 L678.2,65.2 Z" fill="#4a4a4a"/><path d="M457.2,90 L462.6,90 L459.9,93.4 Z" fill="#4a4a4a"/><rect x="473.6" y="83.8" width="12.8" height="14.2" rx="2.2" fill="#f6f6f5" stroke="#c4c1bd" stroke-width=".8"/><path d="M475.6,86.3 L482.8,86.3 L484,87.8 L484,90 L475.6,90 Z" fill="#f4f4f4" stroke="#aaa" stroke-width=".5"/><rect x="475.3" y="89.6" width="9.8" height="6" fill="url(#gOpen)"/><rect x="492.4" y="83.8" width="12.2" height="14.2" rx="2.2" fill="#f6f6f5" stroke="#c4c1bd" stroke-width=".8"/><path d="M501.6,88.6 A4,4 0 1 0 501.8,93.6" fill="none" stroke="#3a80d0" stroke-width="2.4"/><path d="M499,86.2 L503.4,86 L503,90.2 Z" fill="#3a80d0"/><rect x="1164.7" y="81.5" width="6.6" height="6.6" rx="1.2" fill="#c4c4c4" stroke="#8a8a8a" stroke-width="1"/><path d="M1166.4,86.4 L1169.6000000000001,83.2" stroke="#f4f4f4" stroke-width="1.2"/><rect x="1175.8" y="81.5" width="6.6" height="6.6" rx="1.2" fill="#e4e4e4" stroke="#8a8a8a" stroke-width="1"/><path d="M1177.3999999999999,83.1 L1180.8,86.5 M1180.8,83.1 L1177.3999999999999,86.5" stroke="#333" stroke-width="1.2"/><rect x="552.7" y="599.9" width="6.6" height="6.6" rx="1.2" fill="#c4c4c4" stroke="#8a8a8a" stroke-width="1"/><path d="M554.4000000000001,604.8 L557.6,601.6" stroke="#f4f4f4" stroke-width="1.2"/><rect x="563.9" y="599.9" width="6.6" height="6.6" rx="1.2" fill="#e4e4e4" stroke="#8a8a8a" stroke-width="1"/><path d="M565.5,601.5 L568.9,604.9 M568.9,601.5 L565.5,604.9" stroke="#333" stroke-width="1.2"/><rect x="66.8" y="689" width="10.4" height="2.3" fill="#f0f0c8"/><rect x="66.8" y="691.3" width="10.4" height="7.5" fill="url(#gPurple)"/><rect x="67.6" y="692" width="1" height="1.6" fill="#f4e0f4"/><rect x="67.6" y="695" width="1" height="1.6" fill="#f4e0f4"/><rect x="81" y="687" width="1" height="15" fill="#35342f"/><rect x="82" y="687" width="1" height="15" fill="#5a5852" opacity=".5"/><rect x="96.4" y="690.3" width="10" height="7.8" rx="1" fill="#222" stroke="#c8c8c8" stroke-width="1"/><path d="M98,692 L99.6,693.2" stroke="#ddd" stroke-width=".7"/><rect x="213.8" y="687" width="1" height="15" fill="#35342f"/><rect x="214.8" y="687" width="1" height="15" fill="#5a5852" opacity=".4"/><rect x="338.2" y="687" width="1" height="15" fill="#35342f"/><rect x="339.2" y="687" width="1" height="15" fill="#5a5852" opacity=".4"/><rect x="464" y="687" width="1" height="15" fill="#35342f"/><rect x="465" y="687" width="1" height="15" fill="#5a5852" opacity=".4"/><rect x="221" y="689" width="9.2" height="9.9" fill="#f8f8f8"/><path d="M223.5,697 L229,691" stroke="#111" stroke-width="1.8"/><circle cx="229.3" cy="690.7" r="1" fill="#f0a0f0"/><circle cx="223.6" cy="696.6" r=".9" fill="#e0d060"/><rect x="350" y="690" width="6.5" height="9" fill="#d8e4ea"/><circle cx="348.3" cy="690.5" r="1.5" fill="#f4b010"/><circle cx="349.6" cy="693" r="1.4" fill="#f49a10"/><rect x="471.6" y="690" width="9.6" height="9" fill="#f8f8f8"/><path d="M473.1,697 L475.6,692 M476.6,697 L479.6,692" stroke="#3a6ab0" stroke-width="1.2"/><path d="M473.6,694.5 L480.1,694.5" stroke="#2a4a80" stroke-width=".8"/><rect x="597" y="690" width="9.6" height="9" fill="#f8f8f8"/><path d="M598.5,697 L601,692 M602,697 L605,692" stroke="#3a6ab0" stroke-width="1.2"/><path d="M599,694.5 L605.5,694.5" stroke="#2a4a80" stroke-width=".8"/><rect x="1113.5" y="687.5" width="22" height="14" fill="#3a3935" stroke="#8a8780" stroke-width="1"/><rect x="1137.5" y="687.5" width="22" height="14" fill="#3a3935" stroke="#8a8780" stroke-width="1"/><rect x="1161" y="687" width="24" height="15" fill="#f4a080"/><circle cx="1124.2" cy="694.4" r="4.6" fill="#f07010"/><circle cx="1125.2" cy="693.6" r="3" fill="#3050a8"/><path d="M1120,692 Q1122,697 1127,698.5 Q1122,698 1120,694 Z" fill="#f8c020"/><circle cx="1148.2" cy="694.6" r="4.8" fill="#6aa8e8"/><circle cx="1148.2" cy="694.6" r="2" fill="#2a6ac0"/><circle cx="1148.2" cy="694.6" r="1.1" fill="#d8e8f8"/><rect x="1167" y="689.6" width="11" height="10" fill="#f8f8f8"/><path d="M1168.5,698 L1171,692 M1172,698 L1175,692 M1176,690 L1172,699" stroke="#2a4a80" stroke-width="1"/><path d="M574,369 h2 M574,371.5 h2 M574,374 h2" stroke="#d6d4d0" stroke-width=".9"/><path d="M315.5,592 v3 M317.5,592 v3 M319.5,592 v3" stroke="#c8c6c2" stroke-width=".8"/></svg>
</body></html>
